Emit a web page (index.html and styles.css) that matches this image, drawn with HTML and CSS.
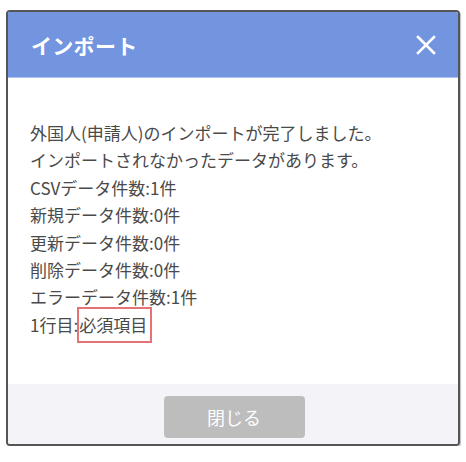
FILE: index.html
```html
<!DOCTYPE html>
<html lang="ja">
<head>
<meta charset="utf-8">
<link rel="stylesheet" href="styles.css">
</head>
<body>
<div class="dialog">
  <div class="header">
    <span class="title">インポート</span>
    <svg class="close" width="20" height="20" viewBox="0 0 20 20"><path d="M2 2L18 18M18 2L2 18" stroke="#fff" stroke-width="2.6" stroke-linecap="square"/></svg>
  </div>
  <div class="content">
    <div class="line">外国人(申請人)のインポートが完了しました。</div>
    <div class="line">インポートされなかったデータがあります。</div>
    <div class="line">CSVデータ件数:1件</div>
    <div class="line">新規データ件数:0件</div>
    <div class="line">更新データ件数:0件</div>
    <div class="line">削除データ件数:0件</div>
    <div class="line">エラーデータ件数:1件</div>
    <div class="line">1行目<span class="colon">:</span><span class="err">必須項目</span></div>
  </div>
  <div class="footer">
    <button class="btn">閉じる</button>
  </div>
</div>
</body>
</html>
```

FILE: styles.css
```css
html, body {
  margin: 0;
  padding: 0;
  background: #fff;
}
body {
  font-family: "Noto Sans CJK JP", "Noto Sans", sans-serif;
}
.dialog {
  margin: 10px 6px 0 6px;
  width: 450px;
  height: 432px;
  border: 2px solid #555;
  border-radius: 4px;
  box-shadow: 1px 1px 1px rgba(0,0,0,0.25);
  display: flex;
  flex-direction: column;
  overflow: hidden;
}
.header {
  height: 65px;
  background: #7395e0;
  border-bottom: 1px solid #a9c0f2;
  display: flex;
  align-items: center;
  justify-content: space-between;
  padding: 0 22px 0 23px;
}
.title {
  color: #fff;
  font-size: 21px;
  font-weight: bold;
  letter-spacing: 0.3px;
}
.close {
  display: block;
  margin-top: 1px;
}
.content {
  flex: 1;
  padding: 41px 22px 0 22px;
  color: #4a4a4a;
  font-size: 17px;
  line-height: 27.4px;
}
.colon {
  margin-right: 0;
}
.err {
  display: inline-block;
  border: 2px solid #e57373;
  padding: 3px 3px 3px 0;
  line-height: 26px;
  vertical-align: middle;
  margin-top: -4px;
  margin-left: -1px;
}
.footer {
  height: 60px;
  background: #f4f4f8;
  display: flex;
  justify-content: center;
  padding-top: 12px;
  box-sizing: border-box;
}
.btn {
  width: 141px;
  height: 42px;
  margin-left: 2px;
  background: #bdbdbd;
  border: none;
  border-radius: 4px;
  color: #fff;
  font-family: "Noto Sans CJK JP", "Noto Sans", sans-serif;
  font-size: 18px;
}
```
